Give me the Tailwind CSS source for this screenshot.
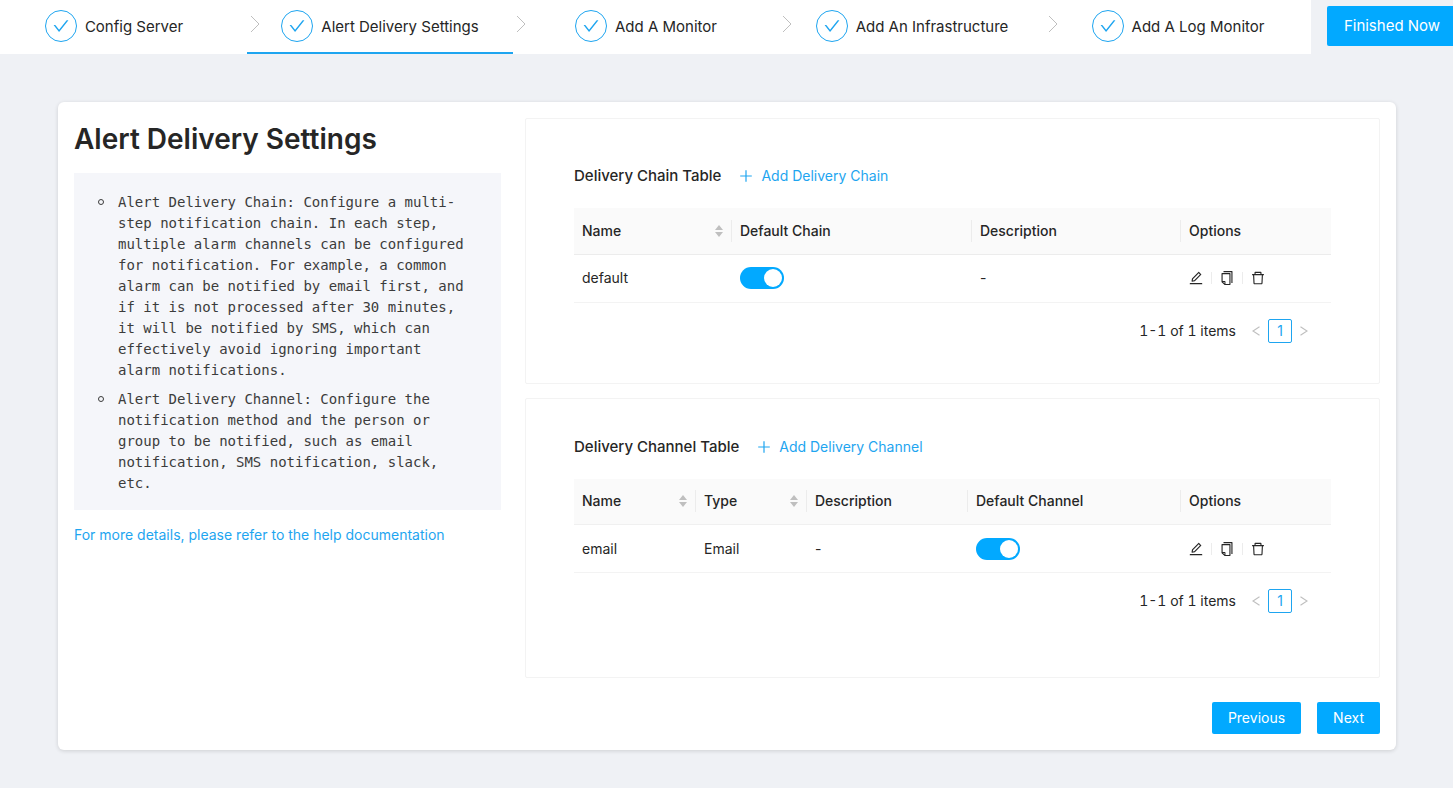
<!DOCTYPE html>
<html lang="en">
<head>
    <meta charset="UTF-8">
    <meta name="viewport" content="width=device-width, initial-scale=1.0">
    <title>Alert Delivery Settings</title>
    <script src="https://cdn.jsdelivr.net/npm/@tailwindcss/browser@4"></script>
</head>
<body class="min-h-screen overflow-x-hidden bg-[#eff1f5] font-['Inter',sans-serif] text-sm text-[#262626]">
    <!-- Icon set -->
    <svg class="hidden">
        <symbol id="icon-check" viewBox="64 64 896 896"><path d="M912 190h-69.9c-9.8 0-19.1 4.5-25.1 12.2L404.7 724.5 207 474a32 32 0 00-25.1-12.2H112c-6.7 0-10.4 7.7-6.3 12.9l273.9 347c12.8 16.2 37.4 16.2 50.3 0l488.4-618.9c4.1-5.1.4-12.8-6.3-12.8z"/></symbol>
        <symbol id="icon-edit" viewBox="64 64 896 896"><path d="M257.7 752c2 0 4-.2 6-.5L431.9 722c2-.4 3.9-1.3 5.3-2.8l423.9-423.9a9.96 9.96 0 000-14.1L694.9 114.9c-1.9-1.9-4.4-2.9-7.1-2.9s-5.2 1-7.1 2.9L256.8 538.8c-1.5 1.5-2.4 3.3-2.8 5.3l-29.5 168.2a33.5 33.5 0 009.4 29.8c6.6 6.4 14.9 9.9 23.8 9.9zm67.4-174.4L687.8 215l73.3 73.3-362.7 362.6-88.9 15.7 15.6-89zM880 836H144c-17.7 0-32 14.3-32 32v36c0 4.4 3.6 8 8 8h784c4.4 0 8-3.6 8-8v-36c0-17.7-14.3-32-32-32z"/></symbol>
        <symbol id="icon-copy" viewBox="64 64 896 896"><path d="M832 64H296c-4.4 0-8 3.6-8 8v56c0 4.4 3.6 8 8 8h496v688c0 4.4 3.6 8 8 8h56c4.4 0 8-3.6 8-8V96c0-17.7-14.3-32-32-32zM704 192H192c-17.7 0-32 14.3-32 32v530.7c0 8.5 3.4 16.6 9.4 22.6l173.3 173.3c2.2 2.2 4.7 4 7.4 5.5v1.9h4.2c3.5 1.3 7.2 2 11 2H704c17.7 0 32-14.3 32-32V224c0-17.7-14.3-32-32-32zM350 856.2L263.9 770H350v86.2zM664 888H414V746c0-22.1-17.9-40-40-40H232V264h432v624z"/></symbol>
        <symbol id="icon-delete" viewBox="64 64 896 896"><path d="M360 184h-8c4.4 0 8-3.6 8-8v8h304v-8c0 4.4 3.6 8 8 8h-8v72h72v-80c0-35.3-28.7-64-64-64H352c-35.3 0-64 28.7-64 64v80h72v-72zm504 72H160c-17.7 0-32 14.3-32 32v32c0 4.4 3.6 8 8 8h60.4l24.7 523c1.6 34.1 29.8 61 63.9 61h454c34.2 0 62.3-26.8 63.9-61l24.7-523H888c4.4 0 8-3.6 8-8v-32c0-17.7-14.3-32-32-32zM731.3 840H292.7l-24.2-512h487l-24.2 512z"/></symbol>
        <symbol id="icon-plus" viewBox="0 0 14 14"><path d="M7 1.2v11.6M1.2 7h11.6" fill="none" stroke="currentColor" stroke-width="1.2"/></symbol>
        <symbol id="icon-sort" viewBox="0 0 8 12"><path d="M4 0L8 5H0zM4 12L0 7h8z"/></symbol>
        <symbol id="icon-arrow" viewBox="0 0 10 18"><path d="M1 1l8 8-8 8" fill="none" stroke="currentColor" stroke-width="1"/></symbol>
        <symbol id="icon-prev" viewBox="0 0 8 10"><path d="M7.5 .7L1 5l6.5 4.3" fill="none" stroke="currentColor" stroke-width="1.1"/></symbol>
        <symbol id="icon-next" viewBox="0 0 8 10"><path d="M.5 .7L7 5 .5 9.3" fill="none" stroke="currentColor" stroke-width="1.1"/></symbol>
    </svg>

    <!-- Steps -->
    <header class="flex items-start">
        <ol class="grid h-[54px] flex-1 grid-cols-[247fr_266fr_266fr_266fr_266fr] bg-white text-[15px]">
            <li class="flex items-center justify-center border-b-2 border-transparent pr-[19px]">
                <a href="#" class="flex items-center gap-2">
                    <span class="flex size-8 items-center justify-center rounded-full border border-[#1ea5f0] text-[#1ea5f0]"><svg class="size-4 fill-current"><use href="#icon-check"/></svg></span>
                    <span class="pt-0.5">Config Server</span>
                </a>
            </li>
            <li class="flex items-center border-b-2 border-[#1ea5f0] px-[3px]">
                <svg class="mb-1 h-[18px] w-[10px] text-[#bfbfbf]"><use href="#icon-arrow"/></svg>
                <a href="#" class="flex flex-1 items-center justify-center gap-2 pr-[10px]" aria-current="step">
                    <span class="flex size-8 items-center justify-center rounded-full border border-[#1ea5f0] text-[#1ea5f0]"><svg class="size-4 fill-current"><use href="#icon-check"/></svg></span>
                    <span class="pt-0.5">Alert Delivery Settings</span>
                </a>
            </li>
            <li class="flex items-center border-b-2 border-transparent px-[3px]">
                <svg class="mb-1 h-[18px] w-[10px] text-[#bfbfbf]"><use href="#icon-arrow"/></svg>
                <a href="#" class="flex flex-1 items-center justify-center gap-2 pr-[10px]">
                    <span class="flex size-8 items-center justify-center rounded-full border border-[#1ea5f0] text-[#1ea5f0]"><svg class="size-4 fill-current"><use href="#icon-check"/></svg></span>
                    <span class="pt-0.5">Add A Monitor</span>
                </a>
            </li>
            <li class="flex items-center border-b-2 border-transparent px-[3px]">
                <svg class="mb-1 h-[18px] w-[10px] text-[#bfbfbf]"><use href="#icon-arrow"/></svg>
                <a href="#" class="flex flex-1 items-center justify-center gap-2 pr-[10px]">
                    <span class="flex size-8 items-center justify-center rounded-full border border-[#1ea5f0] text-[#1ea5f0]"><svg class="size-4 fill-current"><use href="#icon-check"/></svg></span>
                    <span class="pt-0.5">Add An Infrastructure</span>
                </a>
            </li>
            <li class="flex items-center border-b-2 border-transparent px-[3px]">
                <svg class="mb-1 h-[18px] w-[10px] text-[#bfbfbf]"><use href="#icon-arrow"/></svg>
                <a href="#" class="flex flex-1 items-center justify-center gap-2 pr-[10px]">
                    <span class="flex size-8 items-center justify-center rounded-full border border-[#1ea5f0] text-[#1ea5f0]"><svg class="size-4 fill-current"><use href="#icon-check"/></svg></span>
                    <span class="pt-0.5">Add A Log Monitor</span>
                </a>
            </li>
        </ol>
        <button class="mt-1.5 -mr-1 ml-4 h-10 w-[130px] shrink-0 rounded-xs bg-[#02a9ff] text-[15px] text-white">Finished Now</button>
    </header>

    <main class="mt-12 mr-[57px] ml-[58px] rounded-md bg-white p-4 shadow-[0_1px_4px_rgba(0,0,0,0.14)]">
        <div class="grid grid-cols-[1fr_2fr] gap-6">
            <section>
                <h1 class="mt-0.5 text-[28px] leading-[38px] font-semibold">Alert Delivery Settings</h1>
                <ul class="mt-[15px] flex flex-col gap-2 bg-[#f5f6fa] pt-[19px] pr-8 pb-4 pl-6 font-['DejaVu_Sans_Mono',monospace] text-sm leading-[21px] text-[#3c3c3c]">
                    <li class="flex gap-[14px] before:mt-[7px] before:size-1.5 before:shrink-0 before:rounded-full before:border before:border-[#3c3c3c]">Alert Delivery Chain: Configure a multi-step notification chain. In each step, multiple alarm channels can be configured for notification. For example, a common alarm can be notified by email first, and if it is not processed after 30 minutes, it will be notified by SMS, which can effectively avoid ignoring important alarm notifications.</li>
                    <li class="flex gap-[14px] before:mt-[7px] before:size-1.5 before:shrink-0 before:rounded-full before:border before:border-[#3c3c3c]">Alert Delivery Channel: Configure the notification method and the person or group to be notified, such as email notification, SMS notification, slack, etc.</li>
                </ul>
                <a href="#" class="mt-[14px] block leading-[22px] text-[#1ea5f0]">For more details, please refer to the help documentation</a>
            </section>

            <div class="flex flex-col gap-[14px]">
                <!-- Delivery chain -->
                <section class="rounded-xs border border-[#f3f3f3] px-12 pt-[45px] pb-10">
                    <div class="flex h-6 items-center gap-[18px]">
                        <h2 class="text-[15px] font-medium">Delivery Chain Table</h2>
                        <button class="flex items-center gap-2 text-[#1ea5f0]"><svg class="size-[14px]"><use href="#icon-plus"/></svg>Add Delivery Chain</button>
                    </div>
                    <table class="mt-5 w-full table-fixed text-left">
                        <colgroup>
                            <col class="w-[158px]">
                            <col class="w-[240px]">
                            <col class="w-[209px]">
                            <col class="w-[150px]">
                        </colgroup>
                        <thead>
                            <tr class="h-[46px] border-b border-[#ececec] bg-[#fafafa] leading-[22px]">
                                <th class="font-medium">
                                    <div class="flex h-[22px] items-center justify-between border-r border-[#ececec] px-2">Name<svg class="h-3 w-2 fill-[#bfbfbf]"><use href="#icon-sort"/></svg></div>
                                </th>
                                <th class="font-medium"><div class="h-[22px] border-r border-[#ececec] px-2">Default Chain</div></th>
                                <th class="font-medium"><div class="h-[22px] border-r border-[#ececec] px-2">Description</div></th>
                                <th class="px-2 font-medium">Options</th>
                            </tr>
                        </thead>
                        <tbody>
                            <tr class="h-12 border-b border-[#f3f3f3]">
                                <td class="px-2">default</td>
                                <td class="px-2"><input type="checkbox" checked aria-label="Default chain" class="block h-[22px] w-11 appearance-none rounded-full bg-[#bfbfbf] p-0.5 before:block before:size-[18px] before:rounded-full before:bg-white checked:bg-[#02a9ff] checked:before:ml-[22px]"></td>
                                <td class="px-2">-</td>
                                <td class="px-2">
                                    <div class="flex items-center gap-2">
                                        <button aria-label="Edit"><svg class="size-[14px] fill-current"><use href="#icon-edit"/></svg></button>
                                        <span class="h-3 w-px bg-[#ececec]"></span>
                                        <button aria-label="Copy"><svg class="size-[14px] fill-current"><use href="#icon-copy"/></svg></button>
                                        <span class="h-3 w-px bg-[#ececec]"></span>
                                        <button aria-label="Delete"><svg class="size-[14px] fill-current"><use href="#icon-delete"/></svg></button>
                                    </div>
                                </td>
                            </tr>
                        </tbody>
                    </table>
                    <nav class="mt-4 mr-[15px] flex items-center justify-end" aria-label="Delivery chain pages">
                        <span class="mr-2 tabular-nums">1-1 of 1 items</span>
                        <button class="flex size-6 items-center justify-center text-[#bfbfbf]" disabled aria-label="Previous page"><svg class="h-[10px] w-2"><use href="#icon-prev"/></svg></button>
                        <button class="size-6 rounded-xs border border-[#1ea5f0] text-[#1ea5f0]">1</button>
                        <button class="flex size-6 items-center justify-center text-[#bfbfbf]" disabled aria-label="Next page"><svg class="h-[10px] w-2"><use href="#icon-next"/></svg></button>
                    </nav>
                </section>

                <!-- Delivery channel -->
                <section class="rounded-xs border border-[#f3f3f3] px-12 pt-9 pb-16">
                    <div class="flex h-6 items-center gap-[18px]">
                        <h2 class="text-[15px] font-medium">Delivery Channel Table</h2>
                        <button class="flex items-center gap-2 text-[#1ea5f0]"><svg class="size-[14px]"><use href="#icon-plus"/></svg>Add Delivery Channel</button>
                    </div>
                    <table class="mt-5 w-full table-fixed text-left">
                        <colgroup>
                            <col class="w-[122px]">
                            <col class="w-[111px]">
                            <col class="w-[161px]">
                            <col class="w-[213px]">
                            <col class="w-[150px]">
                        </colgroup>
                        <thead>
                            <tr class="h-[46px] border-b border-[#f0f0f0] bg-[#fafafa] leading-[22px]">
                                <th class="font-medium">
                                    <div class="flex h-[22px] items-center justify-between border-r border-[#ececec] px-2">Name<svg class="h-3 w-2 fill-[#bfbfbf]"><use href="#icon-sort"/></svg></div>
                                </th>
                                <th class="font-medium">
                                    <div class="flex h-[22px] items-center justify-between border-r border-[#ececec] px-2">Type<svg class="h-3 w-2 fill-[#bfbfbf]"><use href="#icon-sort"/></svg></div>
                                </th>
                                <th class="font-medium"><div class="h-[22px] border-r border-[#ececec] px-2">Description</div></th>
                                <th class="font-medium"><div class="h-[22px] border-r border-[#ececec] px-2">Default Channel</div></th>
                                <th class="px-2 font-medium">Options</th>
                            </tr>
                        </thead>
                        <tbody>
                            <tr class="h-12 border-b border-[#f3f3f3]">
                                <td class="px-2">email</td>
                                <td class="px-2">Email</td>
                                <td class="px-2">-</td>
                                <td class="px-2"><input type="checkbox" checked aria-label="Default channel" class="block h-[22px] w-11 appearance-none rounded-full bg-[#bfbfbf] p-0.5 before:block before:size-[18px] before:rounded-full before:bg-white checked:bg-[#02a9ff] checked:before:ml-[22px]"></td>
                                <td class="px-2">
                                    <div class="flex items-center gap-2">
                                        <button aria-label="Edit"><svg class="size-[14px] fill-current"><use href="#icon-edit"/></svg></button>
                                        <span class="h-3 w-px bg-[#ececec]"></span>
                                        <button aria-label="Copy"><svg class="size-[14px] fill-current"><use href="#icon-copy"/></svg></button>
                                        <span class="h-3 w-px bg-[#ececec]"></span>
                                        <button aria-label="Delete"><svg class="size-[14px] fill-current"><use href="#icon-delete"/></svg></button>
                                    </div>
                                </td>
                            </tr>
                        </tbody>
                    </table>
                    <nav class="mt-4 mr-[15px] flex items-center justify-end" aria-label="Delivery channel pages">
                        <span class="mr-2 tabular-nums">1-1 of 1 items</span>
                        <button class="flex size-6 items-center justify-center text-[#bfbfbf]" disabled aria-label="Previous page"><svg class="h-[10px] w-2"><use href="#icon-prev"/></svg></button>
                        <button class="size-6 rounded-xs border border-[#1ea5f0] text-[#1ea5f0]">1</button>
                        <button class="flex size-6 items-center justify-center text-[#bfbfbf]" disabled aria-label="Next page"><svg class="h-[10px] w-2"><use href="#icon-next"/></svg></button>
                    </nav>
                </section>
            </div>
        </div>

        <div class="mt-6 flex justify-end gap-4">
            <button class="h-8 rounded-xs bg-[#02a9ff] px-4 text-white">Previous</button>
            <button class="h-8 rounded-xs bg-[#02a9ff] px-4 text-white">Next</button>
        </div>
    </main>
</body>
</html>
